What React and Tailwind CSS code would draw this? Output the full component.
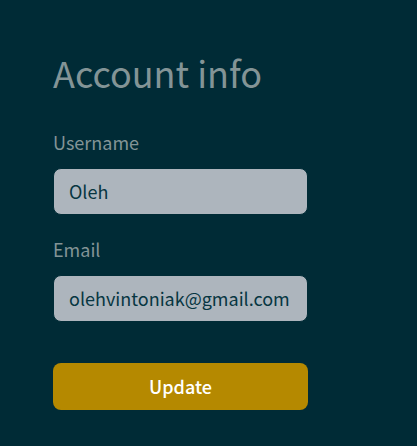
const field =
  "block h-[47px] w-full rounded-lg border border-[#002b36] bg-[#adb5bd] px-[15px] pb-[2px] text-lg text-[#073642] outline-none";
const label = "block text-lg leading-[28px] text-[#839496]";

export default function App() {
  return (
    <main className="min-h-screen bg-[#002b36] px-[53px] pt-12 pb-9 font-['Noto_Sans_CJK_SC','Noto_Sans',sans-serif]">
      <form className="max-w-[255px]" onSubmit={(e) => e.preventDefault()}>
        <h1 className="text-4xl leading-[48px] whitespace-nowrap text-[#839496]">Account info</h1>
        <div className="mt-8">
          <label htmlFor="username" className={label}>Username</label>
          <input id="username" type="text" defaultValue="Oleh" className={`mt-3 ${field}`} />
        </div>
        <div className="mt-5">
          <label htmlFor="email" className={label}>Email</label>
          <input id="email" type="email" defaultValue="olehvintoniak@gmail.com" className={`mt-3 ${field}`} />
        </div>
        <button type="submit" className="mt-[41px] h-[47px] w-full rounded-lg bg-[#b58900] pb-[2px] text-lg font-medium text-white">
          Update
        </button>
      </form>
    </main>
  );
}
